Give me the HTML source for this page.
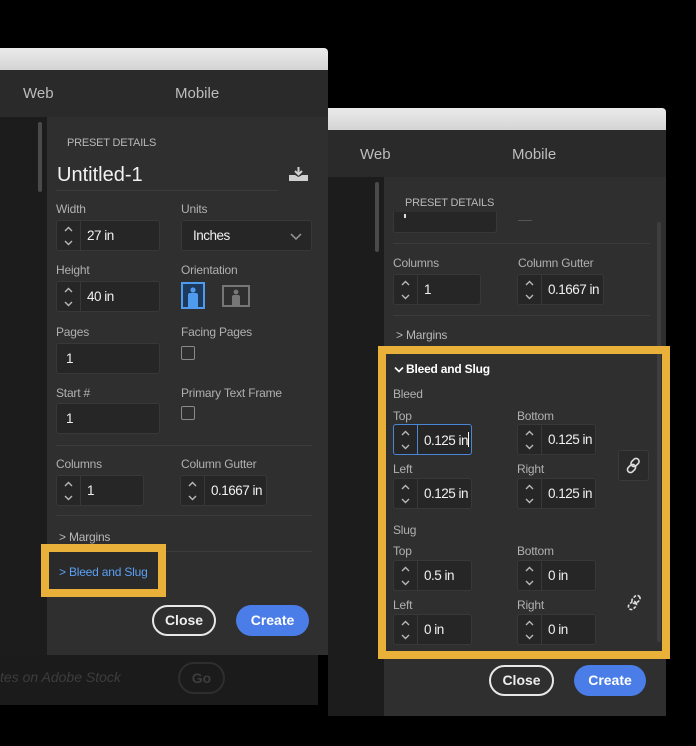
<!DOCTYPE html>
<html><head><meta charset="utf-8"><style>
*{margin:0;padding:0}
body{width:696px;height:746px;background:#000;position:relative;overflow:hidden;font-family:"Liberation Sans",sans-serif}
.a{position:absolute}
.tb{background:linear-gradient(#ebebeb,#d4d4d4)}
.tabs{background:#2a2a2a;border-bottom:1px solid #1a1a1a}
.tab{position:absolute;color:#bdbdbd;font-size:15px}
.side{background:#1c1c1c}
.panel{background:#2f2f2f}
.l{position:absolute;color:#b0b0b0;font-size:12px;letter-spacing:-0.2px}
.in{position:absolute;height:31px;background:#262626;border:1px solid #383838;border-radius:3px;box-sizing:border-box}
.st{position:absolute;left:0;top:0;bottom:0;width:23px;border-right:1px solid #383838}
.v{position:absolute;left:30px;top:7px;color:#f0f0f0;font-size:13.5px;letter-spacing:-0.5px;white-space:nowrap}
.hd{position:absolute;background:#3c3c3c;height:1px}
.cb{position:absolute;width:14px;height:14px;border:1px solid #8a8a8a;border-radius:2px;box-sizing:border-box}
.btnc{position:absolute;height:31px;border:2px solid #e8e8e8;border-radius:16px;box-sizing:border-box;color:#eee;font-size:14px;font-weight:bold;text-align:center;line-height:27px}
.btnb{position:absolute;height:31px;background:#4b7de8;border-radius:16px;color:#fff;font-size:14px;font-weight:bold;text-align:center;line-height:31px}
.or{position:absolute;border:8px solid #e9b03a;box-sizing:border-box}
</style></head><body>
<svg width="0" height="0" style="position:absolute"><defs>
<g id="stp"><path d="M8 10 L11.5 6.5 L15 10 M8 20 L11.5 23.5 L15 20" stroke="#b8b8b8" stroke-width="1.4" fill="none"/></g>
</defs></svg>

<!-- LEFT WINDOW -->
<div class="a side" style="left:0;top:655px;width:318px;height:50px;background:#1b1b1b"></div>
<div class="a" style="left:0;top:669px;color:#3d3d3d;font-size:14px;font-style:italic">tes on Adobe Stock</div>
<div class="a" style="left:178px;top:662px;width:47px;height:32px;border:2px solid #2e2e2e;border-radius:16px;box-sizing:border-box;color:#3d3d3d;font-size:14px;text-align:center;line-height:28px;font-weight:bold">Go</div>

<div class="a tb" style="left:0;top:48px;width:328px;height:22px;border-radius:0 4px 0 0"></div>
<div class="a tabs" style="left:0;top:70px;width:328px;height:47px"></div>
<div class="tab" style="left:23px;top:85px">Web</div>
<div class="tab" style="left:175px;top:85px">Mobile</div>
<div class="a side" style="left:0;top:117px;width:47px;height:538px"></div>
<div class="a" style="left:38px;top:122px;width:4px;height:70px;background:#4a4a4a;border-radius:2px"></div>
<div class="a panel" style="left:47px;top:117px;width:281px;height:538px"></div>

<div class="l" style="left:67px;top:137px;font-size:11px;color:#b8b8b8">PRESET DETAILS</div>
<div class="a" style="left:57px;top:164px;color:#f2f2f2;font-size:20px">Untitled-1</div>
<div class="hd" style="left:56px;top:190px;width:222px"></div>
<svg class="a" style="left:288px;top:166px" width="21" height="16"><path d="M10.5 1 V8 M7 5 L10.5 8.5 L14 5" stroke="#d0d0d0" stroke-width="2" fill="none"/><path d="M1 9 H7 L10.5 11 L14 9 H20 V15 H1 Z" fill="#cfcfcf"/></svg>

<div class="l" style="left:56px;top:202px">Width</div>
<div class="in" style="left:56px;top:220px;width:104px"><div class="st"><svg width="23" height="30"><use href="#stp"/></svg></div><div class="v">27 in</div></div>
<div class="l" style="left:181px;top:202px">Units</div>
<div class="in" style="left:181px;top:220px;width:131px"><div class="v" style="left:11px">Inches</div><svg class="a" style="left:108px;top:12px" width="12" height="8"><path d="M1 1 L6 6 L11 1" stroke="#999" stroke-width="1.5" fill="none"/></svg></div>

<div class="l" style="left:56px;top:263px">Height</div>
<div class="in" style="left:56px;top:281px;width:104px"><div class="st"><svg width="23" height="30"><use href="#stp"/></svg></div><div class="v">40 in</div></div>
<div class="l" style="left:181px;top:263px">Orientation</div>
<svg class="a" style="left:181px;top:282px" width="24" height="27"><rect x="1" y="1" width="22" height="25" fill="#1d3a5c" stroke="#4e9bf0" stroke-width="2"/><circle cx="12" cy="8" r="2.6" fill="#4e9bf0"/><path d="M7 25 V13 Q7 11 9 11 H15 Q17 11 17 13 V25Z" fill="#4e9bf0"/></svg>
<svg class="a" style="left:222px;top:285px" width="28" height="22"><rect x="1" y="1" width="26" height="20" fill="none" stroke="#777" stroke-width="2"/><circle cx="14" cy="7" r="2.4" fill="#777"/><path d="M10 21 V12 Q10 10 12 10 H16 Q18 10 18 12 V21Z" fill="#777"/></svg>

<div class="l" style="left:56px;top:325px">Pages</div>
<div class="in" style="left:56px;top:343px;width:104px"><div class="v" style="left:9px">1</div></div>
<div class="l" style="left:181px;top:325px">Facing Pages</div>
<div class="cb" style="left:181px;top:346px"></div>

<div class="l" style="left:56px;top:386px">Start #</div>
<div class="in" style="left:56px;top:403px;width:104px"><div class="v" style="left:9px">1</div></div>
<div class="l" style="left:181px;top:386px">Primary Text Frame</div>
<div class="cb" style="left:181px;top:406px"></div>

<div class="hd" style="left:56px;top:445px;width:256px"></div>
<div class="l" style="left:56px;top:457px">Columns</div>
<div class="in" style="left:56px;top:475px;width:88px"><div class="st"><svg width="23" height="30"><use href="#stp"/></svg></div><div class="v">1</div></div>
<div class="l" style="left:181px;top:457px">Column Gutter</div>
<div class="in" style="left:180px;top:475px;width:87px"><div class="st"><svg width="23" height="30"><use href="#stp"/></svg></div><div class="v" style="left:30px">0.1667 in</div></div>
<div class="hd" style="left:56px;top:515px;width:256px"></div>
<div class="l" style="left:59px;top:530px;font-size:12px;color:#b8b8b8">&gt; Margins</div>
<div class="hd" style="left:56px;top:551px;width:256px"></div>
<div class="or" style="left:41px;top:544px;width:125px;height:53px"></div>
<div class="a" style="left:49px;top:552px;width:109px;height:37px;background:#2a2a2a"></div>
<div class="l" style="left:59px;top:565px;color:#5aa0f5;font-size:12px">&gt; Bleed and Slug</div>
<div class="btnc" style="left:152px;top:605px;width:64px">Close</div>
<div class="btnb" style="left:236px;top:605px;width:73px">Create</div>

<!-- RIGHT WINDOW -->
<div class="a tb" style="left:328px;top:108px;width:338px;height:22px;border-radius:0 4px 0 0"></div>
<div class="a tabs" style="left:328px;top:130px;width:338px;height:47px"></div>
<div class="tab" style="left:360px;top:146px">Web</div>
<div class="tab" style="left:512px;top:146px">Mobile</div>
<div class="a side" style="left:328px;top:177px;width:56px;height:539px"></div>
<div class="a" style="left:375px;top:182px;width:4px;height:70px;background:#4a4a4a;border-radius:2px"></div>
<div class="a panel" style="left:384px;top:177px;width:282px;height:539px"></div>
<div class="a" style="left:657px;top:222px;width:4px;height:420px;background:#3e3e3e;border-radius:2px"></div>

<div class="l" style="left:405px;top:197px;font-size:11px;color:#b8b8b8">PRESET DETAILS</div>
<div class="in" style="left:393px;top:212px;width:104px;height:21px;border-top:none;border-radius:0 0 3px 3px"><div class="a" style="left:10px;top:2px;width:2px;height:4px;background:#ddd"></div></div>
<div class="hd" style="left:518px;top:220px;width:14px;background:#555"></div>
<div class="hd" style="left:393px;top:243px;width:257px"></div>
<div class="l" style="left:393px;top:256px">Columns</div>
<div class="in" style="left:393px;top:274px;width:88px"><div class="st"><svg width="23" height="30"><use href="#stp"/></svg></div><div class="v">1</div></div>
<div class="l" style="left:518px;top:256px">Column Gutter</div>
<div class="in" style="left:517px;top:274px;width:87px"><div class="st"><svg width="23" height="30"><use href="#stp"/></svg></div><div class="v">0.1667 in</div></div>
<div class="hd" style="left:393px;top:315px;width:257px"></div>
<div class="l" style="left:396px;top:328px;color:#b8b8b8">&gt; Margins</div>

<div class="or" style="left:378px;top:346px;width:292px;height:313px"></div>
<svg class="a" style="left:394px;top:366px" width="10" height="8"><path d="M1 1.5 L5 5.5 L9 1.5" stroke="#fff" stroke-width="1.6" fill="none"/></svg>
<div class="a" style="left:406px;top:362px;color:#fff;font-size:12px;font-weight:bold;letter-spacing:-0.2px">Bleed and Slug</div>
<div class="l" style="left:393px;top:387px">Bleed</div>
<div class="l" style="left:393px;top:409px">Top</div>
<div class="in" style="left:393px;top:424px;width:79px;border-color:#4a86d8"><div class="st" style="border-color:#4a86d8"><svg width="23" height="30"><use href="#stp"/></svg></div><div class="v">0.125 in<span style="display:inline-block;width:1px;height:15px;background:#fff;vertical-align:-2px"></span></div></div>
<div class="l" style="left:517px;top:409px">Bottom</div>
<div class="in" style="left:517px;top:424px;width:79px"><div class="st"><svg width="23" height="30"><use href="#stp"/></svg></div><div class="v">0.125 in</div></div>
<div class="a" style="left:618px;top:450px;width:31px;height:31px;background:#2a2a2a;border:1px solid #3a3a3a;border-radius:3px;box-sizing:border-box"></div>
<svg class="a" style="left:625px;top:457px" width="17" height="17"><g stroke="#ddd" stroke-width="1.6" fill="none"><rect x="7" y="1" width="6" height="9" rx="3" transform="rotate(45 10 5.5)"/><rect x="3.5" y="7" width="6" height="9" rx="3" transform="rotate(45 6.5 11.5)"/></g></svg>
<div class="l" style="left:393px;top:462px">Left</div>
<div class="in" style="left:393px;top:478px;width:79px"><div class="st"><svg width="23" height="30"><use href="#stp"/></svg></div><div class="v">0.125 in</div></div>
<div class="l" style="left:517px;top:462px">Right</div>
<div class="in" style="left:517px;top:478px;width:79px"><div class="st"><svg width="23" height="30"><use href="#stp"/></svg></div><div class="v">0.125 in</div></div>

<div class="l" style="left:393px;top:523px">Slug</div>
<div class="l" style="left:393px;top:544px">Top</div>
<div class="in" style="left:393px;top:560px;width:79px"><div class="st"><svg width="23" height="30"><use href="#stp"/></svg></div><div class="v">0.5 in</div></div>
<div class="l" style="left:517px;top:544px">Bottom</div>
<div class="in" style="left:517px;top:560px;width:79px"><div class="st"><svg width="23" height="30"><use href="#stp"/></svg></div><div class="v">0 in</div></div>
<svg class="a" style="left:626px;top:594px" width="17" height="17"><g stroke="#ddd" stroke-width="1.6" fill="none" stroke-dasharray="3 1.5"><rect x="7" y="1" width="6" height="9" rx="3" transform="rotate(45 10 5.5)"/><rect x="3.5" y="7" width="6" height="9" rx="3" transform="rotate(45 6.5 11.5)"/></g></svg>
<div class="l" style="left:393px;top:598px">Left</div>
<div class="in" style="left:393px;top:614px;width:79px"><div class="st"><svg width="23" height="30"><use href="#stp"/></svg></div><div class="v">0 in</div></div>
<div class="l" style="left:517px;top:598px">Right</div>
<div class="in" style="left:517px;top:614px;width:79px"><div class="st"><svg width="23" height="30"><use href="#stp"/></svg></div><div class="v">0 in</div></div>

<div class="btnc" style="left:489px;top:665px;width:65px">Close</div>
<div class="btnb" style="left:574px;top:665px;width:72px">Create</div>
</body></html>
